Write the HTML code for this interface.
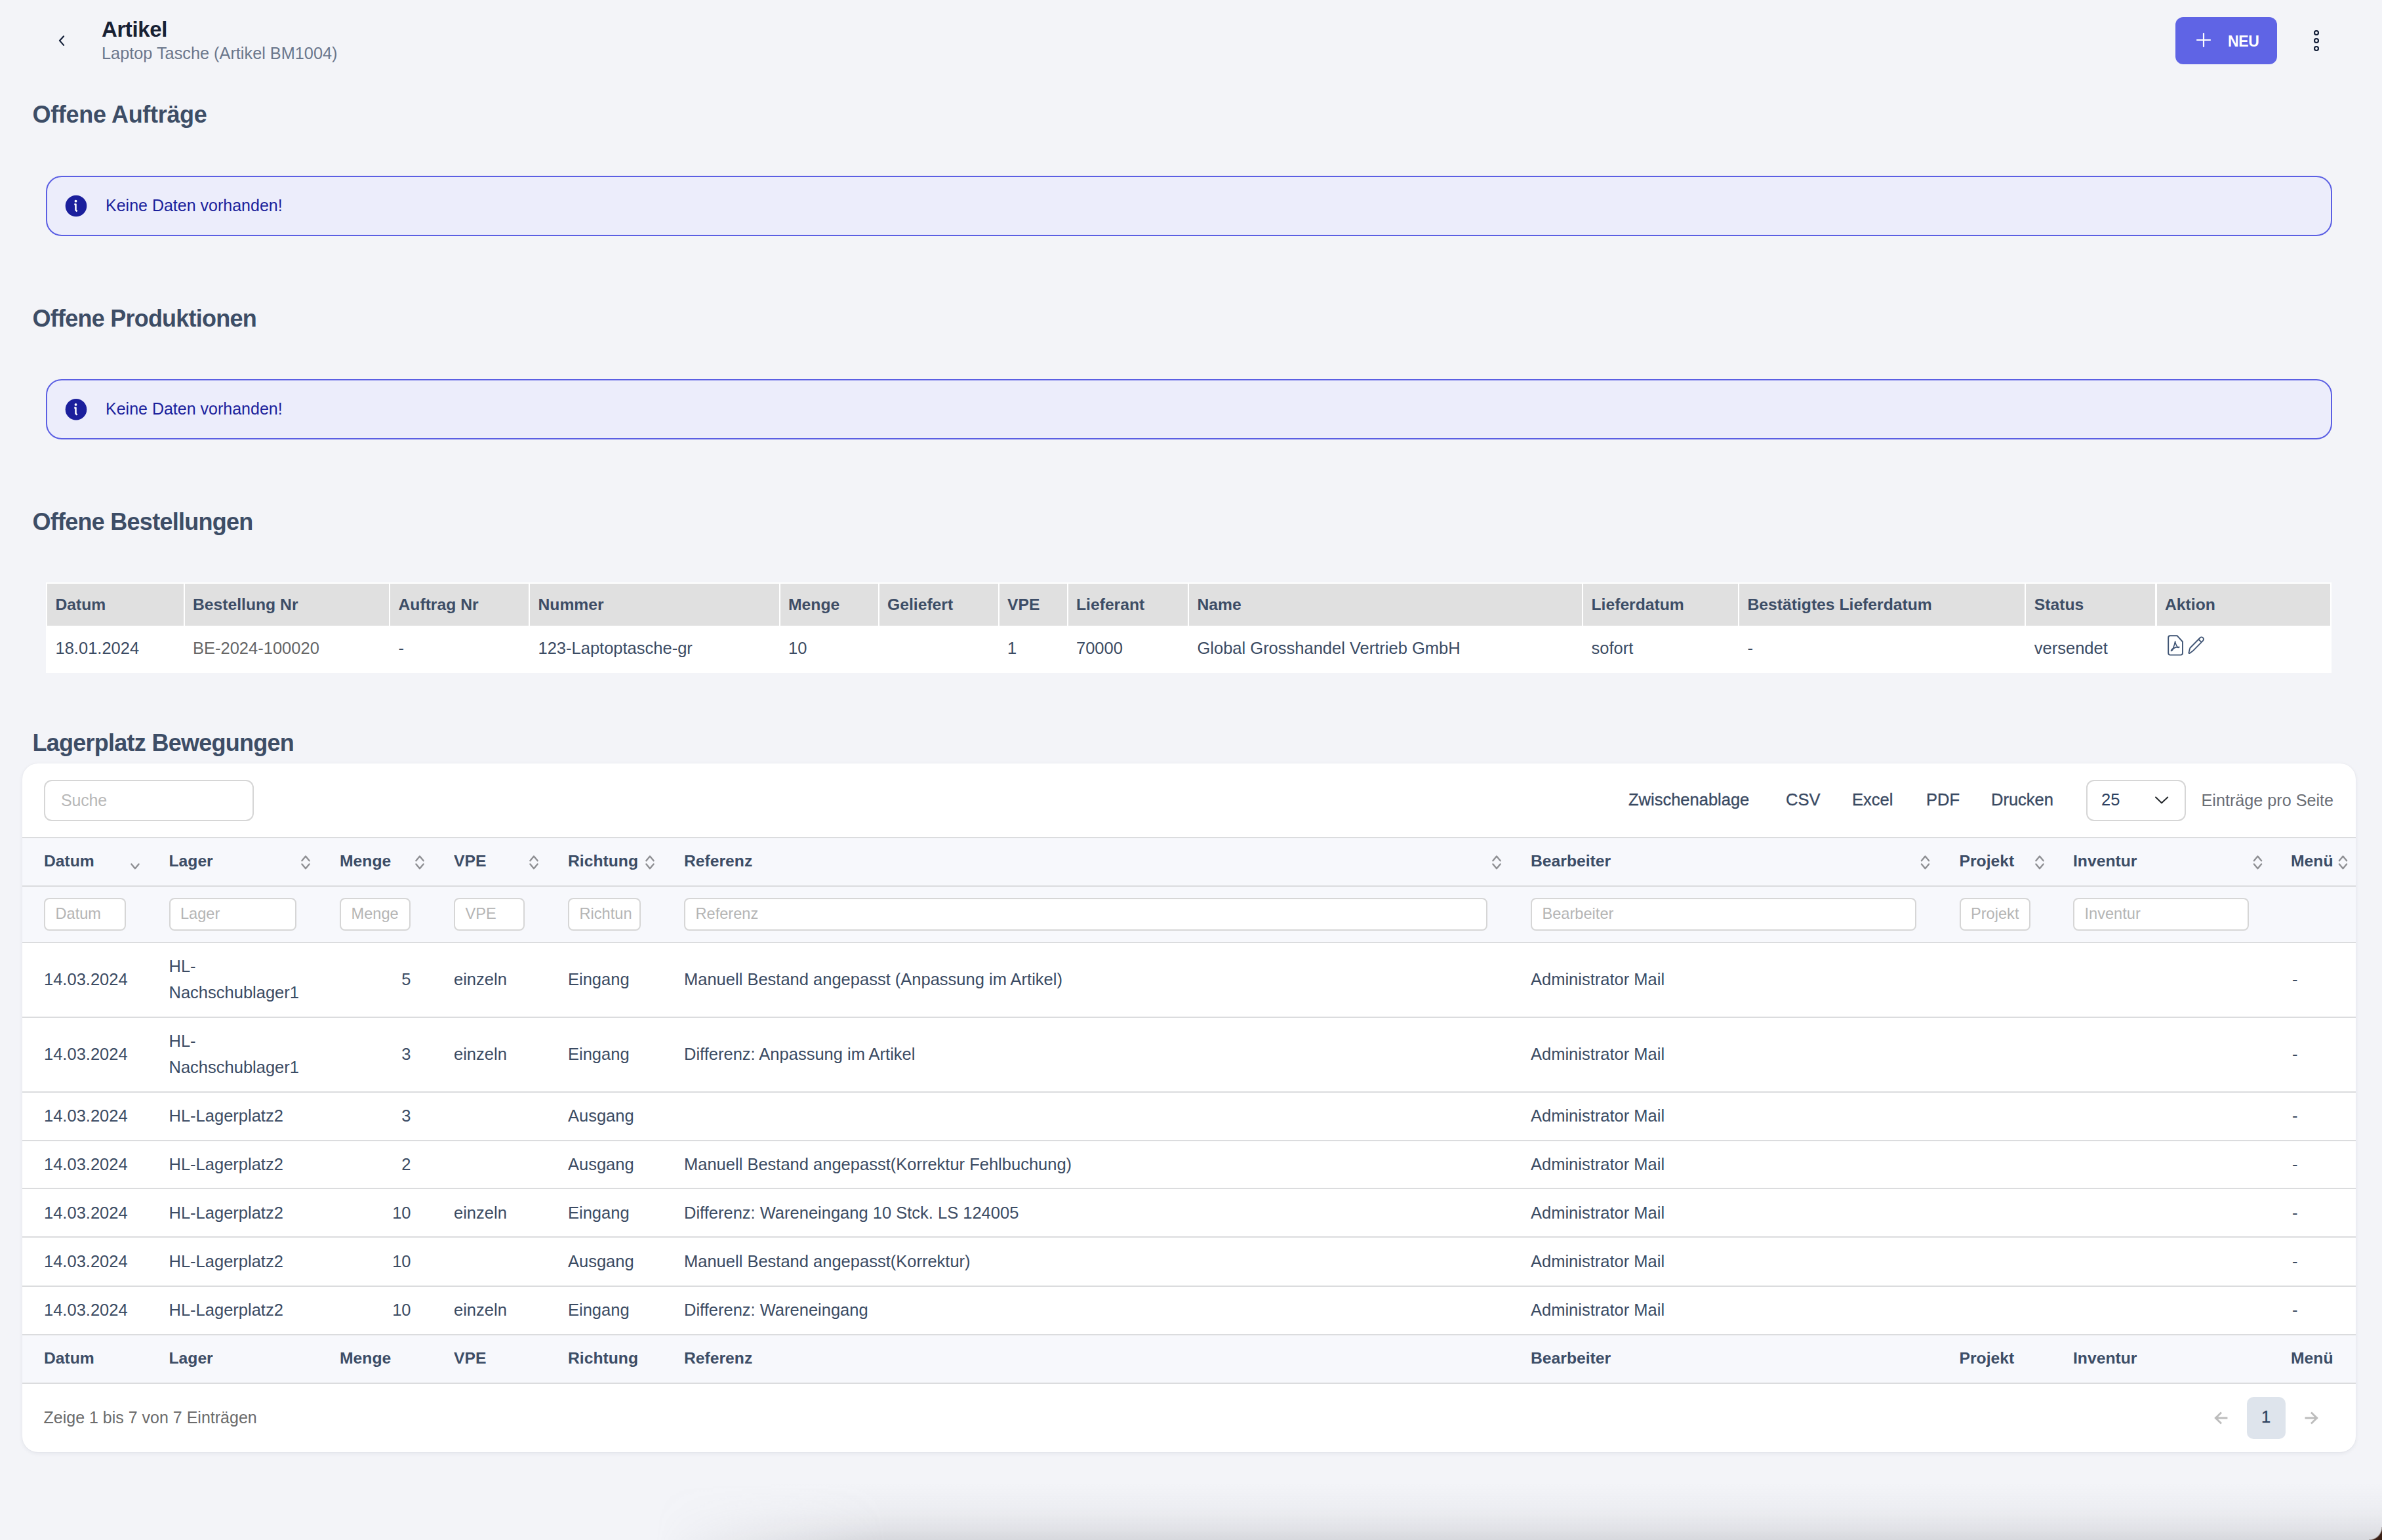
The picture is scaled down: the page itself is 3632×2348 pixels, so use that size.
<!DOCTYPE html>
<html><head><meta charset="utf-8"><title>Artikel</title>
<style>
html,body{margin:0;padding:0;}
body{width:3632px;height:2348px;overflow:hidden;position:relative;background:#F3F4F8;font-family:"Liberation Sans",sans-serif;}
.t{position:absolute;white-space:nowrap;}
.r{position:absolute;}
svg.r{overflow:visible;}
</style></head><body>
<svg class="r" style="left:80px;top:45px;" width="30" height="35" viewBox="80 45 30 35"><polyline points="97.1,55.3 90.9,61.9 97.1,68.9" fill="none" stroke="#0F1B35" stroke-width="2.15" stroke-linecap="round" stroke-linejoin="round"/></svg>
<div class="t" style="left:155.00px;top:28.06px;font-size:33px;line-height:33px;color:#172033;font-weight:700;letter-spacing:-0.4px;">Artikel</div>
<div class="t" style="left:155.00px;top:69.08px;font-size:25.3px;line-height:25.3px;color:#6B778C;">Laptop Tasche (Artikel BM1004)</div>
<div class="r" style="left:3317.00px;top:26.00px;width:154.50px;height:71.50px;background:#5F64E5;border-radius:12px;"></div>
<svg class="r" style="left:3345px;top:46px;" width="30" height="30" viewBox="3345 46 30 30"><path d="M3350 61H3370M3360 51V71" stroke="#fff" stroke-width="2.2" stroke-linecap="round"/></svg>
<div class="t" style="left:3397.00px;top:51.53px;font-size:23px;line-height:23px;color:#ffffff;font-weight:700;letter-spacing:-0.3px;">NEU</div>
<svg class="r" style="left:3520px;top:40px;" width="25" height="45" viewBox="3520 40 25 45"><circle cx="3532" cy="50" r="3" fill="none" stroke="#0F1B35" stroke-width="2.1"/><circle cx="3532" cy="62" r="3" fill="none" stroke="#0F1B35" stroke-width="2.1"/><circle cx="3532" cy="74" r="3" fill="none" stroke="#0F1B35" stroke-width="2.1"/></svg>
<div class="t" style="left:49.50px;top:157.02px;font-size:36px;line-height:36px;color:#3D4D66;font-weight:700;letter-spacing:-0.313px;">Offene Aufträge</div>
<div class="t" style="left:49.50px;top:468.27px;font-size:36px;line-height:36px;color:#3D4D66;font-weight:700;letter-spacing:-0.764px;">Offene Produktionen</div>
<div class="t" style="left:49.50px;top:777.52px;font-size:36px;line-height:36px;color:#3D4D66;font-weight:700;letter-spacing:-0.74px;">Offene Bestellungen</div>
<div class="t" style="left:49.50px;top:1114.52px;font-size:36px;line-height:36px;color:#3D4D66;font-weight:700;letter-spacing:-0.741px;">Lagerplatz Bewegungen</div>
<div class="r" style="left:70.00px;top:267.75px;width:3486.00px;height:92.25px;background:#ECEDFB;border:2.5px solid #5B5FE3;border-radius:24px;box-sizing:border-box;"></div>
<svg class="r" style="left:98px;top:296px;" width="36" height="36" viewBox="98 296 36 36"><circle cx="116" cy="314" r="16.3" fill="#1B1F9C"/><circle cx="115.5" cy="306.7" r="1.9" fill="#fff"/><path d="M113.3 311.8L115.5 311.5V320.3L117.6 322.3" fill="none" stroke="#fff" stroke-width="2.5" stroke-linejoin="round"/></svg>
<div class="t" style="left:161.00px;top:300.83px;font-size:25px;line-height:25px;color:#1B1F9C;">Keine Daten vorhanden!</div>
<div class="r" style="left:70.00px;top:578.00px;width:3486.00px;height:92.25px;background:#ECEDFB;border:2.5px solid #5B5FE3;border-radius:24px;box-sizing:border-box;"></div>
<svg class="r" style="left:98px;top:606px;" width="36" height="36" viewBox="98 606 36 36"><circle cx="116" cy="624.25" r="16.3" fill="#1B1F9C"/><circle cx="115.5" cy="616.95" r="1.9" fill="#fff"/><path d="M113.3 622.05L115.5 621.75V630.55L117.6 632.55" fill="none" stroke="#fff" stroke-width="2.5" stroke-linejoin="round"/></svg>
<div class="t" style="left:161.00px;top:611.08px;font-size:25px;line-height:25px;color:#1B1F9C;">Keine Daten vorhanden!</div>
<div class="r" style="left:70.00px;top:888.00px;width:3484.50px;height:137.50px;background:#fff;"></div>
<div class="r" style="left:72.00px;top:890.00px;width:207.50px;height:64.00px;background:#E0E0E0;"></div>
<div class="t" style="left:84.50px;top:909.84px;font-size:24.7px;line-height:24.7px;color:#3D4D66;font-weight:700;">Datum</div>
<div class="t" style="left:84.50px;top:976.41px;font-size:25.5px;line-height:25.5px;color:#3B4B63;">18.01.2024</div>
<div class="r" style="left:281.50px;top:890.00px;width:311.50px;height:64.00px;background:#E0E0E0;"></div>
<div class="t" style="left:294.00px;top:909.84px;font-size:24.7px;line-height:24.7px;color:#3D4D66;font-weight:700;">Bestellung Nr</div>
<div class="t" style="left:294.00px;top:976.41px;font-size:25.5px;line-height:25.5px;color:#666666;">BE-2024-100020</div>
<div class="r" style="left:595.00px;top:890.00px;width:211.00px;height:64.00px;background:#E0E0E0;"></div>
<div class="t" style="left:607.50px;top:909.84px;font-size:24.7px;line-height:24.7px;color:#3D4D66;font-weight:700;">Auftrag Nr</div>
<div class="t" style="left:607.50px;top:976.41px;font-size:25.5px;line-height:25.5px;color:#3B4B63;">-</div>
<div class="r" style="left:808.00px;top:890.00px;width:379.50px;height:64.00px;background:#E0E0E0;"></div>
<div class="t" style="left:820.50px;top:909.84px;font-size:24.7px;line-height:24.7px;color:#3D4D66;font-weight:700;">Nummer</div>
<div class="t" style="left:820.50px;top:976.41px;font-size:25.5px;line-height:25.5px;color:#3B4B63;">123-Laptoptasche-gr</div>
<div class="r" style="left:1189.50px;top:890.00px;width:149.00px;height:64.00px;background:#E0E0E0;"></div>
<div class="t" style="left:1202.00px;top:909.84px;font-size:24.7px;line-height:24.7px;color:#3D4D66;font-weight:700;">Menge</div>
<div class="t" style="left:1202.00px;top:976.41px;font-size:25.5px;line-height:25.5px;color:#3B4B63;">10</div>
<div class="r" style="left:1340.50px;top:890.00px;width:181.00px;height:64.00px;background:#E0E0E0;"></div>
<div class="t" style="left:1353.00px;top:909.84px;font-size:24.7px;line-height:24.7px;color:#3D4D66;font-weight:700;">Geliefert</div>
<div class="r" style="left:1523.50px;top:890.00px;width:103.00px;height:64.00px;background:#E0E0E0;"></div>
<div class="t" style="left:1536.00px;top:909.84px;font-size:24.7px;line-height:24.7px;color:#3D4D66;font-weight:700;">VPE</div>
<div class="t" style="left:1536.00px;top:976.41px;font-size:25.5px;line-height:25.5px;color:#3B4B63;">1</div>
<div class="r" style="left:1628.50px;top:890.00px;width:182.50px;height:64.00px;background:#E0E0E0;"></div>
<div class="t" style="left:1641.00px;top:909.84px;font-size:24.7px;line-height:24.7px;color:#3D4D66;font-weight:700;">Lieferant</div>
<div class="t" style="left:1641.00px;top:976.41px;font-size:25.5px;line-height:25.5px;color:#3B4B63;">70000</div>
<div class="r" style="left:1813.00px;top:890.00px;width:599.00px;height:64.00px;background:#E0E0E0;"></div>
<div class="t" style="left:1825.50px;top:909.84px;font-size:24.7px;line-height:24.7px;color:#3D4D66;font-weight:700;">Name</div>
<div class="t" style="left:1825.50px;top:976.41px;font-size:25.5px;line-height:25.5px;color:#3B4B63;">Global Grosshandel Vertrieb GmbH</div>
<div class="r" style="left:2414.00px;top:890.00px;width:236.00px;height:64.00px;background:#E0E0E0;"></div>
<div class="t" style="left:2426.50px;top:909.84px;font-size:24.7px;line-height:24.7px;color:#3D4D66;font-weight:700;">Lieferdatum</div>
<div class="t" style="left:2426.50px;top:976.41px;font-size:25.5px;line-height:25.5px;color:#3B4B63;">sofort</div>
<div class="r" style="left:2652.00px;top:890.00px;width:435.30px;height:64.00px;background:#E0E0E0;"></div>
<div class="t" style="left:2664.50px;top:909.84px;font-size:24.7px;line-height:24.7px;color:#3D4D66;font-weight:700;">Bestätigtes Lieferdatum</div>
<div class="t" style="left:2664.50px;top:976.41px;font-size:25.5px;line-height:25.5px;color:#3B4B63;">-</div>
<div class="r" style="left:3089.30px;top:890.00px;width:197.20px;height:64.00px;background:#E0E0E0;"></div>
<div class="t" style="left:3101.80px;top:909.84px;font-size:24.7px;line-height:24.7px;color:#3D4D66;font-weight:700;">Status</div>
<div class="t" style="left:3101.80px;top:976.41px;font-size:25.5px;line-height:25.5px;color:#3B4B63;">versendet</div>
<div class="r" style="left:3288.50px;top:890.00px;width:264.00px;height:64.00px;background:#E0E0E0;"></div>
<div class="t" style="left:3301.00px;top:909.84px;font-size:24.7px;line-height:24.7px;color:#3D4D66;font-weight:700;">Aktion</div>
<svg class="r" style="left:3300px;top:962px;" width="70" height="45" viewBox="3300 962 70 45">
<path d="M3309 969.2H3319.5L3328 978.5V995.5Q3328 998.6 3325 998.6H3309Q3306.2 998.6 3306.2 995.5V972.2Q3306.2 969.2 3309 969.2Z" fill="none" stroke="#3F5474" stroke-width="1.9" stroke-linejoin="round"/>
<path d="M3316.5 978.5Q3317.5 983 3320 986.5Q3317 987 3314.5 988.5Q3312.5 992 3310.5 992.5Q3310 991 3313.5 988.3Q3315.5 984 3316.5 978.5Q3317 977 3316.5 978.5ZM3314.8 987.8Q3318 986.3 3323 986.6Q3322 988 3319.5 987" fill="none" stroke="#3F5474" stroke-width="1.5" stroke-linejoin="round"/>
<path d="M3337.6 994.6Q3336.8 996.6 3338.8 995.9L3343.8 992.3L3359 976.8Q3361.2 974.6 3359 972.4Q3356.8 970.3 3354.5 972.5L3339.3 988Q3338.6 990 3337.6 994.6Z M3352.3 974.8L3356.9 979.2" fill="none" stroke="#3F5474" stroke-width="1.8" stroke-linejoin="round"/>
</svg>
<div class="r" style="left:34.00px;top:1164.00px;width:3557.50px;height:1049.70px;background:#fff;border-radius:24px;box-shadow:0 2px 6px rgba(30,40,70,0.07),0 0 2px rgba(30,40,70,0.06);"></div>
<div class="r" style="left:67.00px;top:1189.00px;width:320.00px;height:62.50px;border:2px solid #D6D6D6;border-radius:12px;box-sizing:border-box;background:#fff;"></div>
<div class="t" style="left:93.00px;top:1207.58px;font-size:25px;line-height:25px;color:#B8B8B8;letter-spacing:-0.2px;">Suche</div>
<div class="t" style="left:2483.00px;top:1207.41px;font-size:25.5px;line-height:25.5px;color:#3A4A63;-webkit-text-stroke:0.35px #3A4A63;">Zwischenablage</div>
<div class="t" style="left:2723.00px;top:1207.41px;font-size:25.5px;line-height:25.5px;color:#3A4A63;-webkit-text-stroke:0.35px #3A4A63;">CSV</div>
<div class="t" style="left:2824.00px;top:1207.41px;font-size:25.5px;line-height:25.5px;color:#3A4A63;-webkit-text-stroke:0.35px #3A4A63;">Excel</div>
<div class="t" style="left:2937.00px;top:1207.41px;font-size:25.5px;line-height:25.5px;color:#3A4A63;-webkit-text-stroke:0.35px #3A4A63;">PDF</div>
<div class="t" style="left:3036.00px;top:1207.41px;font-size:25.5px;line-height:25.5px;color:#3A4A63;-webkit-text-stroke:0.35px #3A4A63;">Drucken</div>
<div class="r" style="left:3180.50px;top:1188.50px;width:152.00px;height:63.00px;border:2px solid #D6D6D6;border-radius:12px;box-sizing:border-box;background:#fff;"></div>
<div class="t" style="left:3204.00px;top:1206.71px;font-size:25.5px;line-height:25.5px;color:#2E4160;">25</div>
<svg class="r" style="left:3280px;top:1208px;" width="32" height="22" viewBox="3280 1208 32 22"><polyline points="3287,1215.5 3296,1224.2 3305.2,1215.5" fill="none" stroke="#212529" stroke-width="2" stroke-linecap="round" stroke-linejoin="round"/></svg>
<div class="t" style="left:3356.50px;top:1207.66px;font-size:25.2px;line-height:25.2px;color:#6B6E75;">Einträge pro Seite</div>
<div class="r" style="left:34.00px;top:1275.50px;width:3557.50px;height:2.00px;background:#DBDCDE;"></div>
<div class="r" style="left:34.00px;top:1277.50px;width:3557.50px;height:72.00px;background:#F7F8FC;"></div>
<div class="r" style="left:34.00px;top:1349.50px;width:3557.50px;height:2.00px;background:#DBDCDE;"></div>
<div class="r" style="left:34.00px;top:1351.50px;width:3557.50px;height:84.50px;background:#F7F8FC;"></div>
<div class="r" style="left:34.00px;top:1436.00px;width:3557.50px;height:2.00px;background:#DBDCDE;"></div>
<div class="t" style="left:67.00px;top:1301.09px;font-size:24.7px;line-height:24.7px;color:#3D4D66;font-weight:700;">Datum</div>
<svg class="r" style="left:194px;top:1298px;" width="24" height="34" viewBox="194 1298 24 34"><polyline points="200.4,1317.5 206,1324.2 211.6,1317.5" fill="none" stroke="#8E8F93" stroke-width="2.4" stroke-linecap="round" stroke-linejoin="round"/></svg>
<div class="t" style="left:257.50px;top:1301.09px;font-size:24.7px;line-height:24.7px;color:#3D4D66;font-weight:700;">Lager</div>
<svg class="r" style="left:454px;top:1298px;" width="24" height="34" viewBox="454 1298 24 34"><polyline points="460.4,1312.3 466,1305.6 471.6,1312.3" fill="none" stroke="#8E8F93" stroke-width="2.4" stroke-linecap="round" stroke-linejoin="round"/><polyline points="460.4,1317.5 466,1324.2 471.6,1317.5" fill="none" stroke="#8E8F93" stroke-width="2.4" stroke-linecap="round" stroke-linejoin="round"/></svg>
<div class="t" style="left:518.00px;top:1301.09px;font-size:24.7px;line-height:24.7px;color:#3D4D66;font-weight:700;">Menge</div>
<svg class="r" style="left:628px;top:1298px;" width="24" height="34" viewBox="628 1298 24 34"><polyline points="634.4,1312.3 640,1305.6 645.6,1312.3" fill="none" stroke="#8E8F93" stroke-width="2.4" stroke-linecap="round" stroke-linejoin="round"/><polyline points="634.4,1317.5 640,1324.2 645.6,1317.5" fill="none" stroke="#8E8F93" stroke-width="2.4" stroke-linecap="round" stroke-linejoin="round"/></svg>
<div class="t" style="left:692.00px;top:1301.09px;font-size:24.7px;line-height:24.7px;color:#3D4D66;font-weight:700;">VPE</div>
<svg class="r" style="left:802px;top:1298px;" width="24" height="34" viewBox="802 1298 24 34"><polyline points="808.4,1312.3 814,1305.6 819.6,1312.3" fill="none" stroke="#8E8F93" stroke-width="2.4" stroke-linecap="round" stroke-linejoin="round"/><polyline points="808.4,1317.5 814,1324.2 819.6,1317.5" fill="none" stroke="#8E8F93" stroke-width="2.4" stroke-linecap="round" stroke-linejoin="round"/></svg>
<div class="t" style="left:866.00px;top:1301.09px;font-size:24.7px;line-height:24.7px;color:#3D4D66;font-weight:700;">Richtung</div>
<svg class="r" style="left:979px;top:1298px;" width="24" height="34" viewBox="979 1298 24 34"><polyline points="985.4,1312.3 991,1305.6 996.6,1312.3" fill="none" stroke="#8E8F93" stroke-width="2.4" stroke-linecap="round" stroke-linejoin="round"/><polyline points="985.4,1317.5 991,1324.2 996.6,1317.5" fill="none" stroke="#8E8F93" stroke-width="2.4" stroke-linecap="round" stroke-linejoin="round"/></svg>
<div class="t" style="left:1043.00px;top:1301.09px;font-size:24.7px;line-height:24.7px;color:#3D4D66;font-weight:700;">Referenz</div>
<svg class="r" style="left:2270px;top:1298px;" width="24" height="34" viewBox="2270 1298 24 34"><polyline points="2276.4,1312.3 2282,1305.6 2287.6,1312.3" fill="none" stroke="#8E8F93" stroke-width="2.4" stroke-linecap="round" stroke-linejoin="round"/><polyline points="2276.4,1317.5 2282,1324.2 2287.6,1317.5" fill="none" stroke="#8E8F93" stroke-width="2.4" stroke-linecap="round" stroke-linejoin="round"/></svg>
<div class="t" style="left:2334.00px;top:1301.09px;font-size:24.7px;line-height:24.7px;color:#3D4D66;font-weight:700;">Bearbeiter</div>
<svg class="r" style="left:2923px;top:1298px;" width="24" height="34" viewBox="2923 1298 24 34"><polyline points="2929.9,1312.3 2935.5,1305.6 2941.1,1312.3" fill="none" stroke="#8E8F93" stroke-width="2.4" stroke-linecap="round" stroke-linejoin="round"/><polyline points="2929.9,1317.5 2935.5,1324.2 2941.1,1317.5" fill="none" stroke="#8E8F93" stroke-width="2.4" stroke-linecap="round" stroke-linejoin="round"/></svg>
<div class="t" style="left:2987.50px;top:1301.09px;font-size:24.7px;line-height:24.7px;color:#3D4D66;font-weight:700;">Projekt</div>
<svg class="r" style="left:3098px;top:1298px;" width="24" height="34" viewBox="3098 1298 24 34"><polyline points="3104.4,1312.3 3110,1305.6 3115.6,1312.3" fill="none" stroke="#8E8F93" stroke-width="2.4" stroke-linecap="round" stroke-linejoin="round"/><polyline points="3104.4,1317.5 3110,1324.2 3115.6,1317.5" fill="none" stroke="#8E8F93" stroke-width="2.4" stroke-linecap="round" stroke-linejoin="round"/></svg>
<div class="t" style="left:3161.00px;top:1301.09px;font-size:24.7px;line-height:24.7px;color:#3D4D66;font-weight:700;">Inventur</div>
<svg class="r" style="left:3430px;top:1298px;" width="24" height="34" viewBox="3430 1298 24 34"><polyline points="3436.9,1312.3 3442.5,1305.6 3448.1,1312.3" fill="none" stroke="#8E8F93" stroke-width="2.4" stroke-linecap="round" stroke-linejoin="round"/><polyline points="3436.9,1317.5 3442.5,1324.2 3448.1,1317.5" fill="none" stroke="#8E8F93" stroke-width="2.4" stroke-linecap="round" stroke-linejoin="round"/></svg>
<div class="t" style="left:3493.00px;top:1301.09px;font-size:24.7px;line-height:24.7px;color:#3D4D66;font-weight:700;">Menü</div>
<svg class="r" style="left:3560px;top:1298px;" width="24" height="34" viewBox="3560 1298 24 34"><polyline points="3566.9,1312.3 3572.5,1305.6 3578.1,1312.3" fill="none" stroke="#8E8F93" stroke-width="2.4" stroke-linecap="round" stroke-linejoin="round"/><polyline points="3566.9,1317.5 3572.5,1324.2 3578.1,1317.5" fill="none" stroke="#8E8F93" stroke-width="2.4" stroke-linecap="round" stroke-linejoin="round"/></svg>
<div class="r" style="left:67.00px;top:1369.00px;width:125.00px;height:50.00px;border:2px solid #D6D6D6;border-radius:8px;box-sizing:border-box;background:#fff;overflow:hidden;"></div>
<div class="r" style="left:67.00px;top:1369px;width:112.00px;height:50px;overflow:hidden;">
<div class="t" style="left:17.50px;top:13.02px;font-size:23.6px;line-height:23.6px;color:#B5B5B5;">Datum</div>
</div>
<div class="r" style="left:257.50px;top:1369.00px;width:194.50px;height:50.00px;border:2px solid #D6D6D6;border-radius:8px;box-sizing:border-box;background:#fff;overflow:hidden;"></div>
<div class="r" style="left:257.50px;top:1369px;width:181.50px;height:50px;overflow:hidden;">
<div class="t" style="left:17.50px;top:13.02px;font-size:23.6px;line-height:23.6px;color:#B5B5B5;">Lager</div>
</div>
<div class="r" style="left:518.00px;top:1369.00px;width:108.40px;height:50.00px;border:2px solid #D6D6D6;border-radius:8px;box-sizing:border-box;background:#fff;overflow:hidden;"></div>
<div class="r" style="left:518.00px;top:1369px;width:95.40px;height:50px;overflow:hidden;">
<div class="t" style="left:17.50px;top:13.02px;font-size:23.6px;line-height:23.6px;color:#B5B5B5;">Menge</div>
</div>
<div class="r" style="left:692.00px;top:1369.00px;width:108.40px;height:50.00px;border:2px solid #D6D6D6;border-radius:8px;box-sizing:border-box;background:#fff;overflow:hidden;"></div>
<div class="r" style="left:692.00px;top:1369px;width:95.40px;height:50px;overflow:hidden;">
<div class="t" style="left:17.50px;top:13.02px;font-size:23.6px;line-height:23.6px;color:#B5B5B5;">VPE</div>
</div>
<div class="r" style="left:866.00px;top:1369.00px;width:111.40px;height:50.00px;border:2px solid #D6D6D6;border-radius:8px;box-sizing:border-box;background:#fff;overflow:hidden;"></div>
<div class="r" style="left:866.00px;top:1369px;width:98.40px;height:50px;overflow:hidden;">
<div class="t" style="left:17.50px;top:13.02px;font-size:23.6px;line-height:23.6px;color:#B5B5B5;">Richtung</div>
</div>
<div class="r" style="left:1043.00px;top:1369.00px;width:1225.00px;height:50.00px;border:2px solid #D6D6D6;border-radius:8px;box-sizing:border-box;background:#fff;overflow:hidden;"></div>
<div class="r" style="left:1043.00px;top:1369px;width:1212.00px;height:50px;overflow:hidden;">
<div class="t" style="left:17.50px;top:13.02px;font-size:23.6px;line-height:23.6px;color:#B5B5B5;">Referenz</div>
</div>
<div class="r" style="left:2334.00px;top:1369.00px;width:588.00px;height:50.00px;border:2px solid #D6D6D6;border-radius:8px;box-sizing:border-box;background:#fff;overflow:hidden;"></div>
<div class="r" style="left:2334.00px;top:1369px;width:575.00px;height:50px;overflow:hidden;">
<div class="t" style="left:17.50px;top:13.02px;font-size:23.6px;line-height:23.6px;color:#B5B5B5;">Bearbeiter</div>
</div>
<div class="r" style="left:2987.50px;top:1369.00px;width:108.00px;height:50.00px;border:2px solid #D6D6D6;border-radius:8px;box-sizing:border-box;background:#fff;overflow:hidden;"></div>
<div class="r" style="left:2987.50px;top:1369px;width:95.00px;height:50px;overflow:hidden;">
<div class="t" style="left:17.50px;top:13.02px;font-size:23.6px;line-height:23.6px;color:#B5B5B5;">Projekt</div>
</div>
<div class="r" style="left:3161.00px;top:1369.00px;width:267.50px;height:50.00px;border:2px solid #D6D6D6;border-radius:8px;box-sizing:border-box;background:#fff;overflow:hidden;"></div>
<div class="r" style="left:3161.00px;top:1369px;width:254.50px;height:50px;overflow:hidden;">
<div class="t" style="left:17.50px;top:13.02px;font-size:23.6px;line-height:23.6px;color:#B5B5B5;">Inventur</div>
</div>
<div class="r" style="left:34.00px;top:1550.00px;width:3557.50px;height:2.00px;background:#DBDCDE;"></div>
<div class="t" style="left:67.00px;top:1481.41px;font-size:25.5px;line-height:25.5px;color:#3B4B63;">14.03.2024</div>
<div class="t" style="left:257.50px;top:1461.41px;font-size:25.5px;line-height:25.5px;color:#3B4B63;">HL-</div>
<div class="t" style="left:257.50px;top:1501.41px;font-size:25.5px;line-height:25.5px;color:#3B4B63;">Nachschublager1</div>
<div class="t" style="right:3005.50px;top:1481.41px;font-size:25.5px;line-height:25.5px;color:#3B4B63;">5</div>
<div class="t" style="left:692.00px;top:1481.41px;font-size:25.5px;line-height:25.5px;color:#3B4B63;">einzeln</div>
<div class="t" style="left:866.00px;top:1481.41px;font-size:25.5px;line-height:25.5px;color:#3B4B63;">Eingang</div>
<div class="t" style="left:1043.00px;top:1481.41px;font-size:25.5px;line-height:25.5px;color:#3B4B63;">Manuell Bestand angepasst (Anpassung im Artikel)</div>
<div class="t" style="left:2334.00px;top:1481.41px;font-size:25.5px;line-height:25.5px;color:#3B4B63;">Administrator Mail</div>
<div class="t" style="left:3495.00px;top:1481.41px;font-size:25.5px;line-height:25.5px;color:#3B4B63;">-</div>
<div class="r" style="left:34.00px;top:1664.00px;width:3557.50px;height:2.00px;background:#DBDCDE;"></div>
<div class="t" style="left:67.00px;top:1595.41px;font-size:25.5px;line-height:25.5px;color:#3B4B63;">14.03.2024</div>
<div class="t" style="left:257.50px;top:1575.41px;font-size:25.5px;line-height:25.5px;color:#3B4B63;">HL-</div>
<div class="t" style="left:257.50px;top:1615.41px;font-size:25.5px;line-height:25.5px;color:#3B4B63;">Nachschublager1</div>
<div class="t" style="right:3005.50px;top:1595.41px;font-size:25.5px;line-height:25.5px;color:#3B4B63;">3</div>
<div class="t" style="left:692.00px;top:1595.41px;font-size:25.5px;line-height:25.5px;color:#3B4B63;">einzeln</div>
<div class="t" style="left:866.00px;top:1595.41px;font-size:25.5px;line-height:25.5px;color:#3B4B63;">Eingang</div>
<div class="t" style="left:1043.00px;top:1595.41px;font-size:25.5px;line-height:25.5px;color:#3B4B63;">Differenz: Anpassung im Artikel</div>
<div class="t" style="left:2334.00px;top:1595.41px;font-size:25.5px;line-height:25.5px;color:#3B4B63;">Administrator Mail</div>
<div class="t" style="left:3495.00px;top:1595.41px;font-size:25.5px;line-height:25.5px;color:#3B4B63;">-</div>
<div class="r" style="left:34.00px;top:1737.60px;width:3557.50px;height:2.00px;background:#DBDCDE;"></div>
<div class="t" style="left:67.00px;top:1689.21px;font-size:25.5px;line-height:25.5px;color:#3B4B63;">14.03.2024</div>
<div class="t" style="left:257.50px;top:1689.21px;font-size:25.5px;line-height:25.5px;color:#3B4B63;">HL-Lagerplatz2</div>
<div class="t" style="right:3005.50px;top:1689.21px;font-size:25.5px;line-height:25.5px;color:#3B4B63;">3</div>
<div class="t" style="left:866.00px;top:1689.21px;font-size:25.5px;line-height:25.5px;color:#3B4B63;">Ausgang</div>
<div class="t" style="left:2334.00px;top:1689.21px;font-size:25.5px;line-height:25.5px;color:#3B4B63;">Administrator Mail</div>
<div class="t" style="left:3495.00px;top:1689.21px;font-size:25.5px;line-height:25.5px;color:#3B4B63;">-</div>
<div class="r" style="left:34.00px;top:1811.20px;width:3557.50px;height:2.00px;background:#DBDCDE;"></div>
<div class="t" style="left:67.00px;top:1762.81px;font-size:25.5px;line-height:25.5px;color:#3B4B63;">14.03.2024</div>
<div class="t" style="left:257.50px;top:1762.81px;font-size:25.5px;line-height:25.5px;color:#3B4B63;">HL-Lagerplatz2</div>
<div class="t" style="right:3005.50px;top:1762.81px;font-size:25.5px;line-height:25.5px;color:#3B4B63;">2</div>
<div class="t" style="left:866.00px;top:1762.81px;font-size:25.5px;line-height:25.5px;color:#3B4B63;">Ausgang</div>
<div class="t" style="left:1043.00px;top:1762.81px;font-size:25.5px;line-height:25.5px;color:#3B4B63;">Manuell Bestand angepasst(Korrektur Fehlbuchung)</div>
<div class="t" style="left:2334.00px;top:1762.81px;font-size:25.5px;line-height:25.5px;color:#3B4B63;">Administrator Mail</div>
<div class="t" style="left:3495.00px;top:1762.81px;font-size:25.5px;line-height:25.5px;color:#3B4B63;">-</div>
<div class="r" style="left:34.00px;top:1885.20px;width:3557.50px;height:2.00px;background:#DBDCDE;"></div>
<div class="t" style="left:67.00px;top:1836.61px;font-size:25.5px;line-height:25.5px;color:#3B4B63;">14.03.2024</div>
<div class="t" style="left:257.50px;top:1836.61px;font-size:25.5px;line-height:25.5px;color:#3B4B63;">HL-Lagerplatz2</div>
<div class="t" style="right:3005.50px;top:1836.61px;font-size:25.5px;line-height:25.5px;color:#3B4B63;">10</div>
<div class="t" style="left:692.00px;top:1836.61px;font-size:25.5px;line-height:25.5px;color:#3B4B63;">einzeln</div>
<div class="t" style="left:866.00px;top:1836.61px;font-size:25.5px;line-height:25.5px;color:#3B4B63;">Eingang</div>
<div class="t" style="left:1043.00px;top:1836.61px;font-size:25.5px;line-height:25.5px;color:#3B4B63;">Differenz: Wareneingang 10 Stck. LS 124005</div>
<div class="t" style="left:2334.00px;top:1836.61px;font-size:25.5px;line-height:25.5px;color:#3B4B63;">Administrator Mail</div>
<div class="t" style="left:3495.00px;top:1836.61px;font-size:25.5px;line-height:25.5px;color:#3B4B63;">-</div>
<div class="r" style="left:34.00px;top:1959.80px;width:3557.50px;height:2.00px;background:#DBDCDE;"></div>
<div class="t" style="left:67.00px;top:1910.91px;font-size:25.5px;line-height:25.5px;color:#3B4B63;">14.03.2024</div>
<div class="t" style="left:257.50px;top:1910.91px;font-size:25.5px;line-height:25.5px;color:#3B4B63;">HL-Lagerplatz2</div>
<div class="t" style="right:3005.50px;top:1910.91px;font-size:25.5px;line-height:25.5px;color:#3B4B63;">10</div>
<div class="t" style="left:866.00px;top:1910.91px;font-size:25.5px;line-height:25.5px;color:#3B4B63;">Ausgang</div>
<div class="t" style="left:1043.00px;top:1910.91px;font-size:25.5px;line-height:25.5px;color:#3B4B63;">Manuell Bestand angepasst(Korrektur)</div>
<div class="t" style="left:2334.00px;top:1910.91px;font-size:25.5px;line-height:25.5px;color:#3B4B63;">Administrator Mail</div>
<div class="t" style="left:3495.00px;top:1910.91px;font-size:25.5px;line-height:25.5px;color:#3B4B63;">-</div>
<div class="r" style="left:34.00px;top:2034.00px;width:3557.50px;height:2.00px;background:#DBDCDE;"></div>
<div class="t" style="left:67.00px;top:1985.31px;font-size:25.5px;line-height:25.5px;color:#3B4B63;">14.03.2024</div>
<div class="t" style="left:257.50px;top:1985.31px;font-size:25.5px;line-height:25.5px;color:#3B4B63;">HL-Lagerplatz2</div>
<div class="t" style="right:3005.50px;top:1985.31px;font-size:25.5px;line-height:25.5px;color:#3B4B63;">10</div>
<div class="t" style="left:692.00px;top:1985.31px;font-size:25.5px;line-height:25.5px;color:#3B4B63;">einzeln</div>
<div class="t" style="left:866.00px;top:1985.31px;font-size:25.5px;line-height:25.5px;color:#3B4B63;">Eingang</div>
<div class="t" style="left:1043.00px;top:1985.31px;font-size:25.5px;line-height:25.5px;color:#3B4B63;">Differenz: Wareneingang</div>
<div class="t" style="left:2334.00px;top:1985.31px;font-size:25.5px;line-height:25.5px;color:#3B4B63;">Administrator Mail</div>
<div class="t" style="left:3495.00px;top:1985.31px;font-size:25.5px;line-height:25.5px;color:#3B4B63;">-</div>
<div class="r" style="left:34.00px;top:2036.00px;width:3557.50px;height:72.00px;background:#F7F8FC;"></div>
<div class="r" style="left:34.00px;top:2108.00px;width:3557.50px;height:2.00px;background:#DBDCDE;"></div>
<div class="t" style="left:67.00px;top:2059.29px;font-size:24.7px;line-height:24.7px;color:#3D4D66;font-weight:700;">Datum</div>
<div class="t" style="left:257.50px;top:2059.29px;font-size:24.7px;line-height:24.7px;color:#3D4D66;font-weight:700;">Lager</div>
<div class="t" style="left:518.00px;top:2059.29px;font-size:24.7px;line-height:24.7px;color:#3D4D66;font-weight:700;">Menge</div>
<div class="t" style="left:692.00px;top:2059.29px;font-size:24.7px;line-height:24.7px;color:#3D4D66;font-weight:700;">VPE</div>
<div class="t" style="left:866.00px;top:2059.29px;font-size:24.7px;line-height:24.7px;color:#3D4D66;font-weight:700;">Richtung</div>
<div class="t" style="left:1043.00px;top:2059.29px;font-size:24.7px;line-height:24.7px;color:#3D4D66;font-weight:700;">Referenz</div>
<div class="t" style="left:2334.00px;top:2059.29px;font-size:24.7px;line-height:24.7px;color:#3D4D66;font-weight:700;">Bearbeiter</div>
<div class="t" style="left:2987.50px;top:2059.29px;font-size:24.7px;line-height:24.7px;color:#3D4D66;font-weight:700;">Projekt</div>
<div class="t" style="left:3161.00px;top:2059.29px;font-size:24.7px;line-height:24.7px;color:#3D4D66;font-weight:700;">Inventur</div>
<div class="t" style="left:3493.00px;top:2059.29px;font-size:24.7px;line-height:24.7px;color:#3D4D66;font-weight:700;">Menü</div>
<div class="t" style="left:66.50px;top:2148.83px;font-size:25px;line-height:25px;color:#6B6B6B;">Zeige 1 bis 7 von 7 Einträgen</div>
<div class="r" style="left:3426.00px;top:2130.00px;width:59.00px;height:64.00px;background:#DEE4EC;border-radius:10px;"></div>
<div class="t" style="left:3255.00px;width:400px;text-align:center;top:2148.41px;font-size:25.5px;line-height:25.5px;color:#2E4160;-webkit-text-stroke:0.3px #2E4160;">1</div>
<svg class="r" style="left:3370px;top:2145px;" width="170" height="35" viewBox="3370 2145 170 35">
<path d="M3395 2162H3378.5M3386 2154.5L3378.3 2162L3386 2169.5" fill="none" stroke="#BDBDBD" stroke-width="2.9" stroke-linecap="square"/>
<path d="M3516 2162H3532.5M3525 2154.5L3532.7 2162L3525 2169.5" fill="none" stroke="#BDBDBD" stroke-width="2.9" stroke-linecap="square"/>
</svg>
<div class="r" style="left:0.00px;top:2262.00px;width:3632.00px;height:86.00px;background:linear-gradient(to bottom, rgba(140,142,150,0) 0%, rgba(140,142,150,0.06) 45%, rgba(140,142,150,0.17) 80%, rgba(140,142,150,0.27) 100%);-webkit-mask-image:linear-gradient(to right, transparent 1000px, #000 1350px);"></div>
<div class="r" style="left:3612.00px;top:2328.00px;width:20.00px;height:20.00px;background:radial-gradient(circle at 0 0, rgba(59,33,22,0) 19px, #3B2116 21px);"></div>
</body></html>
